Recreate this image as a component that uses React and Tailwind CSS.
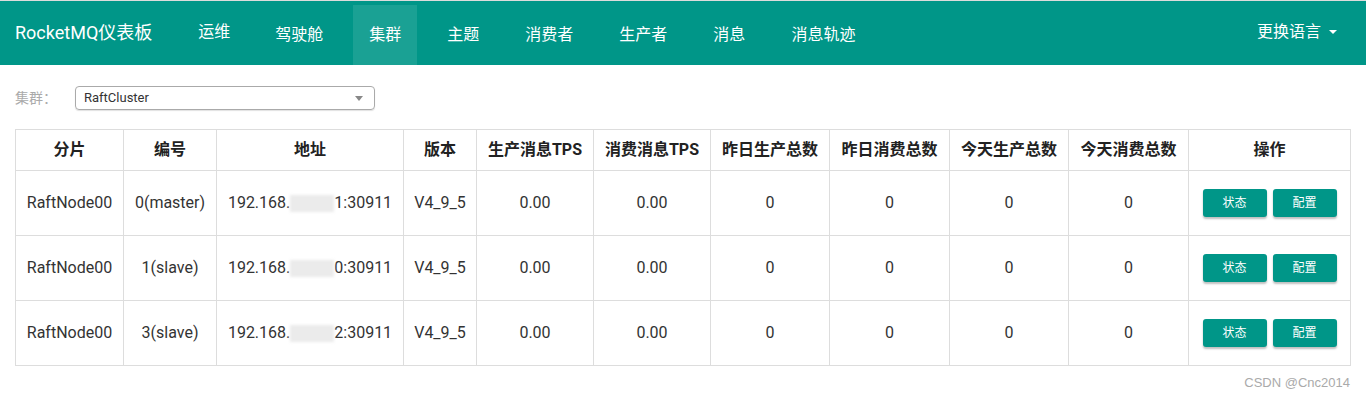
import React from 'react';

const navItems = ['驾驶舱', '集群', '主题', '消费者', '生产者', '消息', '消息轨迹'];

const columns = [
  { title: '分片', w: 'w-[108px]' },
  { title: '编号', w: 'w-[93px]' },
  { title: '地址', w: 'w-[187px]' },
  { title: '版本', w: 'w-[73px]' },
  { title: '生产消息TPS', w: 'w-[117px]' },
  { title: '消费消息TPS', w: 'w-[117px]' },
  { title: '昨日生产总数', w: 'w-[119px]' },
  { title: '昨日消费总数', w: 'w-[120px]' },
  { title: '今天生产总数', w: 'w-[119px]' },
  { title: '今天消费总数', w: 'w-[120px]' },
  { title: '操作', w: 'w-[162px]' },
];

const rows = [
  { node: 'RaftNode00', id: '0(master)', tail: '1:30911' },
  { node: 'RaftNode00', id: '1(slave)', tail: '0:30911' },
  { node: 'RaftNode00', id: '3(slave)', tail: '2:30911' },
];

function App() {
  return (
    <div className="min-h-[394px] bg-white text-[#333] font-['Roboto','Noto_Sans_CJK_SC',sans-serif]">
      {/* navbar */}
      <div className="border-t border-[#dcdcdc] bg-[#009688] h-[65px] flex items-stretch px-[15px] text-white">
        <div className="self-center text-[18px] mr-[30px] -mt-[2px]">RocketMQ仪表板</div>
        <div className="self-center px-4 text-[16px] -mt-[2px]">运维</div>
        <div className="flex items-end gap-[14px] ml-[13px]">
          {navItems.map((item) => (
            <div
              key={item}
              className={`h-[60px] flex items-center px-4 text-[16px] ${item === '集群' ? 'bg-[#1aa194]' : ''}`}
            >
              {item}
            </div>
          ))}
        </div>
        <div className="ml-auto self-center flex items-center gap-2 text-[16px] -mt-[2px] pr-[14px]">
          更换语言
          <span className="w-0 h-0 border-l-[4px] border-r-[4px] border-t-[4px] border-l-transparent border-r-transparent border-t-white" />
        </div>
      </div>

      {/* cluster select */}
      <div className="flex items-center px-[15px] pt-[21px]">
        <span className="text-[14px] text-[#aaa] w-[60px]">集群：</span>
        <div className="w-[300px] h-[24px] border border-[#aaa] rounded-[4px] shadow-[0_1px_1px_rgba(0,0,0,0.12)] flex items-center justify-between pl-[8px] pr-[11px] text-[13px] text-[#333]">
          RaftCluster
          <span className="w-0 h-0 border-l-[4px] border-r-[4px] border-t-[5px] border-l-transparent border-r-transparent border-t-[#888]" />
        </div>
      </div>

      {/* table */}
      <div className="px-[15px] pt-[19px]">
        <table className="table-fixed border-collapse w-[1335px] text-[16px]">
          <colgroup>
            {columns.map((c) => (
              <col key={c.title} className={c.w} />
            ))}
          </colgroup>
          <thead>
            <tr className="h-[41px]">
              {columns.map((c) => (
                <th key={c.title} className="border border-[#ddd] font-bold text-[#222] text-center">
                  {c.title}
                </th>
              ))}
            </tr>
          </thead>
          <tbody>
            {rows.map((r, i) => (
              <tr key={i} className="h-[65px] text-center">
                <td className="border border-[#ddd]">{r.node}</td>
                <td className="border border-[#ddd]">{r.id}</td>
                <td className="border border-[#ddd]">
                  <span className="inline-flex items-center">
                    192.168.
                    <span className="inline-block w-[44px] h-[17px] bg-[#ebebeb] blur-[1.5px]" />
                    {r.tail}
                  </span>
                </td>
                <td className="border border-[#ddd]">V4_9_5</td>
                <td className="border border-[#ddd]">0.00</td>
                <td className="border border-[#ddd]">0.00</td>
                <td className="border border-[#ddd]">0</td>
                <td className="border border-[#ddd]">0</td>
                <td className="border border-[#ddd]">0</td>
                <td className="border border-[#ddd]">0</td>
                <td className="border border-[#ddd]">
                  <div className="flex justify-center gap-[6px]">
                    <button className="w-[64px] h-[28px] rounded-[3px] bg-[#009688] text-white text-[12px] shadow-[0_2px_2px_rgba(0,0,0,0.25)]">
                      状态
                    </button>
                    <button className="w-[64px] h-[28px] rounded-[3px] bg-[#009688] text-white text-[12px] shadow-[0_2px_2px_rgba(0,0,0,0.25)]">
                      配置
                    </button>
                  </div>
                </td>
              </tr>
            ))}
          </tbody>
        </table>
        <div className="flex justify-end w-[1335px] pt-[7px] text-[13px] text-[#aaa] font-['Liberation_Sans',sans-serif]">
          CSDN @Cnc2014
        </div>
      </div>
    </div>
  );
}

export default App;
